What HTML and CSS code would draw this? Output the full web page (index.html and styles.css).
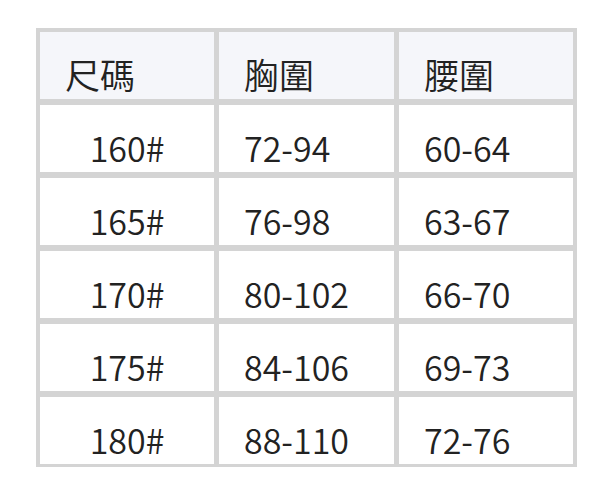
FILE: index.html
```html
<!DOCTYPE html>
<html lang="zh-Hant">
<head>
<meta charset="utf-8">
<link rel="stylesheet" href="styles.css">
</head>
<body>
<div class="size-table">
  <div class="cell head">尺碼</div>
  <div class="cell head">胸圍</div>
  <div class="cell head">腰圍</div>

  <div class="cell center">160#</div>
  <div class="cell">72-94</div>
  <div class="cell">60-64</div>

  <div class="cell center">165#</div>
  <div class="cell">76-98</div>
  <div class="cell">63-67</div>

  <div class="cell center">170#</div>
  <div class="cell">80-102</div>
  <div class="cell">66-70</div>

  <div class="cell center">175#</div>
  <div class="cell">84-106</div>
  <div class="cell">69-73</div>

  <div class="cell center">180#</div>
  <div class="cell">88-110</div>
  <div class="cell">72-76</div>
</div>
</body>
</html>
```
FILE: styles.css
```css
html, body {
  margin: 0;
  padding: 0;
  background: #ffffff;
}
body {
  padding: 28px 0 0 36px;
  font-family: "Noto Sans CJK TC", "Noto Sans", sans-serif;
  color: #222222;
}
.size-table {
  display: inline-grid;
  grid-template-columns: 174px 175px 174px;
  grid-auto-rows: 67px;
  gap: 6px 5px;
  padding: 4px 4px 3px 4px;
  background: #d4d4d4;
}
.cell {
  background: #ffffff;
  font-size: 34px;
  font-weight: 350;
  line-height: normal;
  display: flex;
  align-items: flex-end;
  padding-left: 25px;
  white-space: nowrap;
}
.cell.head {
  background: #f5f6fa;
  font-size: 35px;
}
.cell.center {
  justify-content: center;
  padding-left: 0;
}
```
